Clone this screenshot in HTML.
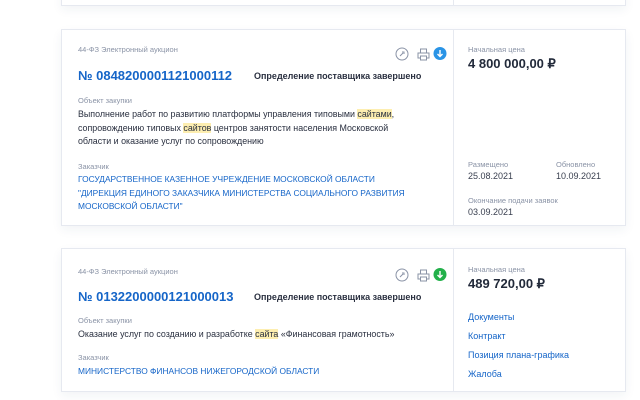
<!DOCTYPE html>
<html><head><meta charset="utf-8"><style>
*{margin:0;padding:0;box-sizing:border-box}
body{width:640px;height:400px;background:#fff;font-family:"Liberation Sans",sans-serif;position:relative;overflow:hidden}
.card{position:absolute;left:61px;width:565px;background:#fff;border:1px solid #e6e9f0;box-shadow:0 4px 10px rgba(40,60,100,.06)}
.div{position:absolute;left:391px;top:0;bottom:0;border-left:1px solid #e6e9f0}
.t{position:absolute;white-space:nowrap}
.sm{font-size:7.5px;color:#8a93a6}
.num{font-size:13px;font-weight:bold;color:#1565c8}
.st{font-size:9px;font-weight:bold;color:#2a3040}
.txt{font-size:8.9px;color:#2a3040;line-height:13.5px}
.cu{font-size:8.4px;color:#1565c8;line-height:13.5px}
.price{font-size:13px;font-weight:bold;color:#222a3a}
.dt{font-size:9px;color:#3a4050}
.lk{font-size:9px;color:#1565c8}
mark{background:#fdeeb0;color:inherit}
</style></head><body>
<div class="card" style="top:-10px;height:16px"><div class="div"></div></div>

<div class="card" style="top:29px;height:197px">
<div class="div"></div>
<div class="t sm" style="left:16px;top:15px">44-ФЗ Электронный аукцион</div>
<svg class="t" style="left:333px;top:17px" width="52" height="14" viewBox="0 0 52 14">
<circle cx="7" cy="7" r="6" fill="none" stroke="#8a93a6" stroke-width="1"/><path d="M5 9l3-3M7 5h2v2" stroke="#8a93a6" fill="none" stroke-width="1"/>
<rect x="23" y="6" width="11" height="5" fill="none" stroke="#8a93a6"/><rect x="25.5" y="2" width="6" height="4" fill="none" stroke="#8a93a6"/><rect x="25.5" y="9" width="6" height="4" fill="#fff" stroke="#8a93a6"/>
<circle cx="45" cy="6.5" r="6.5" fill="#2a94e6"/><path d="M45 3v6M42.5 7l2.5 2.5 2.5-2.5" stroke="#fff" stroke-width="1.4" fill="none"/>
</svg>
<div class="t num" style="left:16px;top:38px">№ 0848200001121000112</div>
<div class="t st" style="left:192px;top:41px">Определение поставщика завершено</div>
<div class="t sm" style="left:16px;top:66px">Объект закупки</div>
<div class="t txt" style="left:16px;top:78px">Выполнение работ по развитию платформы управления типовыми <mark>сайтами</mark>,<br>сопровождению типовых <mark>сайтов</mark> центров занятости населения Московской<br>области и оказание услуг по сопровождению</div>
<div class="t sm" style="left:16px;top:132px">Заказчик</div>
<div class="t cu" style="left:16px;top:143px">ГОСУДАРСТВЕННОЕ КАЗЕННОЕ УЧРЕЖДЕНИЕ МОСКОВСКОЙ ОБЛАСТИ<br>"ДИРЕКЦИЯ ЕДИНОГО ЗАКАЗЧИКА МИНИСТЕРСТВА СОЦИАЛЬНОГО РАЗВИТИЯ<br>МОСКОВСКОЙ ОБЛАСТИ"</div>
<div class="t sm" style="left:406px;top:15px">Начальная цена</div>
<div class="t price" style="left:406px;top:26px">4 800 000,00 ₽</div>
<div class="t sm" style="left:406px;top:130px">Размещено</div>
<div class="t dt" style="left:406px;top:141px">25.08.2021</div>
<div class="t sm" style="left:494px;top:130px">Обновлено</div>
<div class="t dt" style="left:494px;top:141px">10.09.2021</div>
<div class="t sm" style="left:406px;top:166px">Окончание подачи заявок</div>
<div class="t dt" style="left:406px;top:177px">03.09.2021</div>
</div>

<div class="card" style="top:248px;height:144px">
<div class="div"></div>
<div class="t sm" style="left:16px;top:18px">44-ФЗ Электронный аукцион</div>
<svg class="t" style="left:333px;top:19px" width="52" height="14" viewBox="0 0 52 14">
<circle cx="7" cy="7" r="6" fill="none" stroke="#8a93a6" stroke-width="1"/><path d="M5 9l3-3M7 5h2v2" stroke="#8a93a6" fill="none" stroke-width="1"/>
<rect x="23" y="6" width="11" height="5" fill="none" stroke="#8a93a6"/><rect x="25.5" y="2" width="6" height="4" fill="none" stroke="#8a93a6"/><rect x="25.5" y="9" width="6" height="4" fill="#fff" stroke="#8a93a6"/>
<circle cx="45" cy="6.5" r="6.5" fill="#22b04a"/><path d="M45 3v6M42.5 7l2.5 2.5 2.5-2.5" stroke="#fff" stroke-width="1.4" fill="none"/>
</svg>
<div class="t num" style="left:16px;top:40px">№ 0132200000121000013</div>
<div class="t st" style="left:192px;top:43px">Определение поставщика завершено</div>
<div class="t sm" style="left:16px;top:67px">Объект закупки</div>
<div class="t txt" style="left:16px;top:79px">Оказание услуг по созданию и разработке <mark>сайта</mark> «Финансовая грамотность»</div>
<div class="t sm" style="left:16px;top:104px">Заказчик</div>
<div class="t cu" style="left:16px;top:116px">МИНИСТЕРСТВО ФИНАНСОВ НИЖЕГОРОДСКОЙ ОБЛАСТИ</div>
<div class="t sm" style="left:406px;top:16px">Начальная цена</div>
<div class="t price" style="left:406px;top:27px">489 720,00 ₽</div>
<div class="t lk" style="left:406px;top:63px">Документы</div>
<div class="t lk" style="left:406px;top:82px">Контракт</div>
<div class="t lk" style="left:406px;top:101px">Позиция плана-графика</div>
<div class="t lk" style="left:406px;top:120px">Жалоба</div>
</div>
</body></html>
